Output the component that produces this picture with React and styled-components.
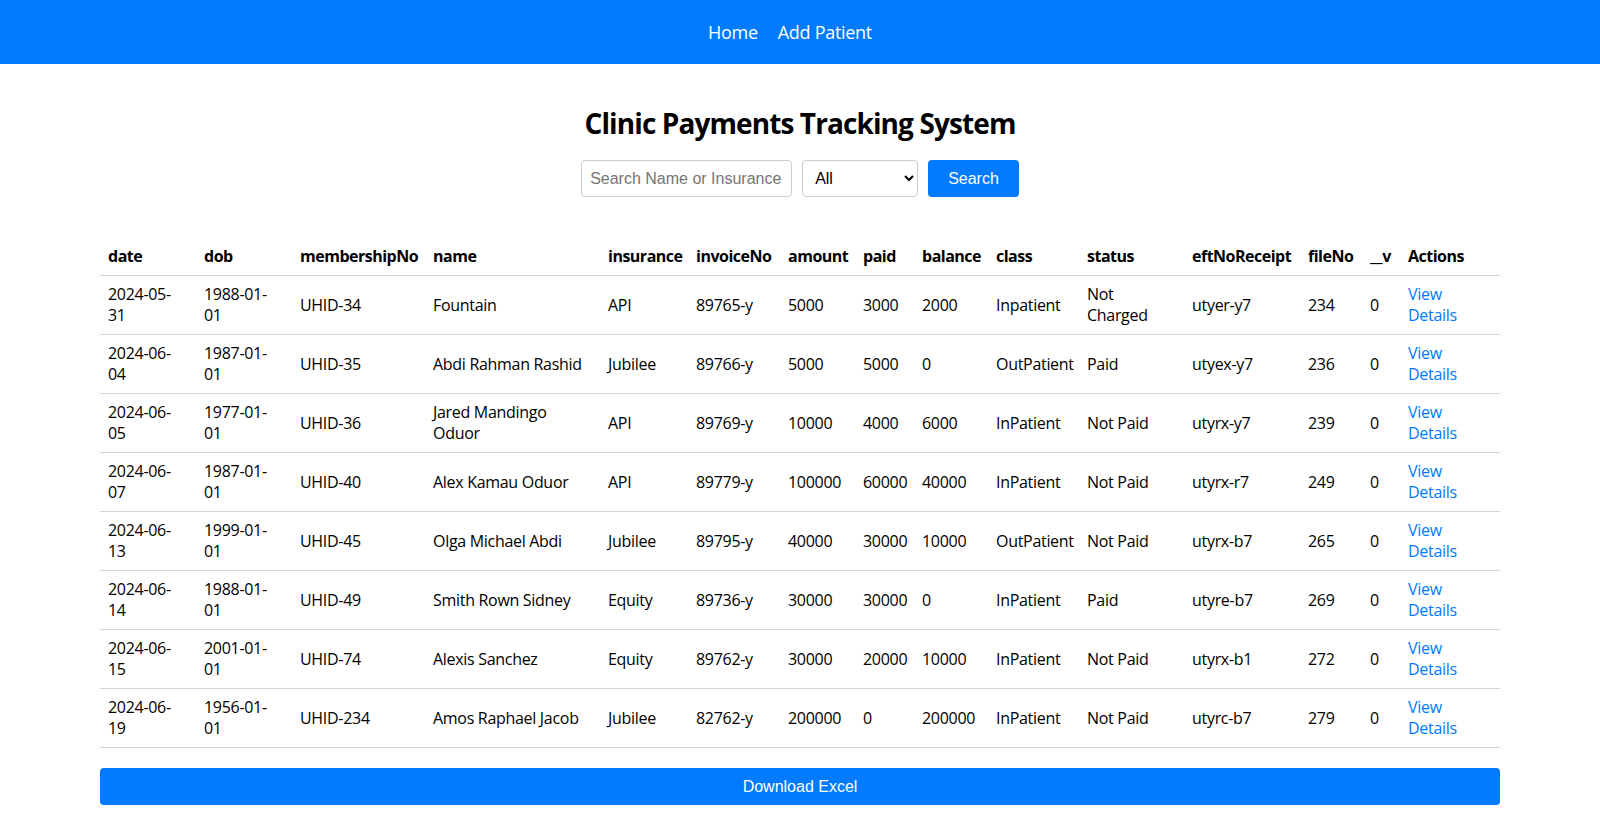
import React, { useState } from "react";
import styled, { createGlobalStyle } from "styled-components";

const GlobalStyle = createGlobalStyle`
  body {
    margin: 0;
    font-family: "Open Sans", "Noto Sans", sans-serif;
    color: #000;
    background: #fff;
  }
`;

const patients = [
  { date: "2024-05-31", dob: "1988-01-01", membershipNo: "UHID-34", name: "Fountain", insurance: "API", invoiceNo: "89765-y", amount: 5000, paid: 3000, balance: 2000, class: "Inpatient", status: "Not Charged", eftNoReceipt: "utyer-y7", fileNo: 234, __v: 0 },
  { date: "2024-06-04", dob: "1987-01-01", membershipNo: "UHID-35", name: "Abdi Rahman Rashid", insurance: "Jubilee", invoiceNo: "89766-y", amount: 5000, paid: 5000, balance: 0, class: "OutPatient", status: "Paid", eftNoReceipt: "utyex-y7", fileNo: 236, __v: 0 },
  { date: "2024-06-05", dob: "1977-01-01", membershipNo: "UHID-36", name: "Jared Mandingo Oduor", insurance: "API", invoiceNo: "89769-y", amount: 10000, paid: 4000, balance: 6000, class: "InPatient", status: "Not Paid", eftNoReceipt: "utyrx-y7", fileNo: 239, __v: 0 },
  { date: "2024-06-07", dob: "1987-01-01", membershipNo: "UHID-40", name: "Alex Kamau Oduor", insurance: "API", invoiceNo: "89779-y", amount: 100000, paid: 60000, balance: 40000, class: "InPatient", status: "Not Paid", eftNoReceipt: "utyrx-r7", fileNo: 249, __v: 0 },
  { date: "2024-06-13", dob: "1999-01-01", membershipNo: "UHID-45", name: "Olga Michael Abdi", insurance: "Jubilee", invoiceNo: "89795-y", amount: 40000, paid: 30000, balance: 10000, class: "OutPatient", status: "Not Paid", eftNoReceipt: "utyrx-b7", fileNo: 265, __v: 0 },
  { date: "2024-06-14", dob: "1988-01-01", membershipNo: "UHID-49", name: "Smith Rown Sidney", insurance: "Equity", invoiceNo: "89736-y", amount: 30000, paid: 30000, balance: 0, class: "InPatient", status: "Paid", eftNoReceipt: "utyre-b7", fileNo: 269, __v: 0 },
  { date: "2024-06-15", dob: "2001-01-01", membershipNo: "UHID-74", name: "Alexis Sanchez", insurance: "Equity", invoiceNo: "89762-y", amount: 30000, paid: 20000, balance: 10000, class: "InPatient", status: "Not Paid", eftNoReceipt: "utyrx-b1", fileNo: 272, __v: 0 },
  { date: "2024-06-19", dob: "1956-01-01", membershipNo: "UHID-234", name: "Amos Raphael Jacob", insurance: "Jubilee", invoiceNo: "82762-y", amount: 200000, paid: 0, balance: 200000, class: "InPatient", status: "Not Paid", eftNoReceipt: "utyrc-b7", fileNo: 279, __v: 0 },
];

// column keys with the widths measured from the screenshot
const columns = [
  ["date", 96],
  ["dob", 96],
  ["membershipNo", 133],
  ["name", 175],
  ["insurance", 88],
  ["invoiceNo", 92],
  ["amount", 75],
  ["paid", 59],
  ["balance", 74],
  ["class", 91],
  ["status", 105],
  ["eftNoReceipt", 116],
  ["fileNo", 62],
  ["__v", 38],
];

const App = () => {
  const [query, setQuery] = useState("");
  const [filter, setFilter] = useState("All");

  return (
    <>
      <GlobalStyle />
      <Navbar>
        <NavLink href="#">Home</NavLink>
        <NavLink href="#">Add Patient</NavLink>
      </Navbar>
      <Main>
        <Title>Clinic Payments Tracking System</Title>
        <SearchBar onSubmit={(e) => e.preventDefault()}>
          <SearchInput
            type="text"
            placeholder="Search Name or Insurance"
            value={query}
            onChange={(e) => setQuery(e.target.value)}
          />
          <FilterSelect value={filter} onChange={(e) => setFilter(e.target.value)}>
            <option>All</option>
            <option>Paid</option>
            <option>Not Paid</option>
            <option>Not Charged</option>
          </FilterSelect>
          <PrimaryButton type="submit">Search</PrimaryButton>
        </SearchBar>

        <Table>
          <colgroup>
            {columns.map(([key, w]) => (
              <col key={key} style={{ width: w }} />
            ))}
            <col />
          </colgroup>
          <thead>
            <tr>
              {columns.map(([key]) => (
                <Th key={key}>{key}</Th>
              ))}
              <Th>Actions</Th>
            </tr>
          </thead>
          <tbody>
            {patients.map((p) => (
              <tr key={p.membershipNo}>
                {columns.map(([key]) => (
                  <Td key={key}>{p[key]}</Td>
                ))}
                <Td>
                  <DetailsLink href="#">View Details</DetailsLink>
                </Td>
              </tr>
            ))}
          </tbody>
        </Table>

        <DownloadButton>Download Excel</DownloadButton>
      </Main>
    </>
  );
};

const Navbar = styled.nav`
  height: 64px;
  background: #007bff;
  display: flex;
  justify-content: center;
  align-items: center;
`;

const NavLink = styled.a`
  color: #fff;
  text-decoration: none;
  font-size: 18px;
  letter-spacing: -0.3px;
  margin-right: 20px;
`;

const Main = styled.main`
  padding: 40px 100px 20px;
  display: flex;
  flex-direction: column;
  align-items: center;
`;

const Title = styled.h1`
  margin: 0;
  font-size: 28px;
  line-height: 38px;
  font-weight: 700;
  letter-spacing: -0.9px;
  text-align: center;
`;

const SearchBar = styled.form`
  margin-top: 18px;
  display: flex;
  gap: 10px;
  align-items: center;
`;

const SearchInput = styled.input`
  width: 211px;
  height: 37px;
  box-sizing: border-box;
  padding: 8px;
  border: 1px solid #ccc;
  border-radius: 4px;
  font-family: "Liberation Sans", Arial, sans-serif;
  font-size: 16px;

  &::placeholder {
    color: #757575;
  }
`;

const FilterSelect = styled.select`
  width: 116px;
  height: 37px;
  box-sizing: border-box;
  padding: 0 8px;
  border: 1px solid #ccc;
  border-radius: 4px;
  background: #fff;
  color: #000;
  font-family: "Liberation Sans", Arial, sans-serif;
  font-size: 16px;
`;

const PrimaryButton = styled.button`
  height: 37px;
  padding: 0 20px;
  border: none;
  border-radius: 4px;
  background: #007bff;
  color: #fff;
  font-family: "Liberation Sans", Arial, sans-serif;
  font-size: 16px;
  cursor: pointer;
`;

const Table = styled.table`
  margin-top: 41px;
  width: 100%;
  table-layout: fixed;
  border-collapse: collapse;
  font-size: 16px;
  line-height: 21px;
  letter-spacing: -0.3px;
`;

const Th = styled.th`
  text-align: left;
  font-weight: 700;
  letter-spacing: -0.5px;
  padding: 8px;
  border-bottom: 1px solid #d6d6d6;
  white-space: nowrap;
`;

const Td = styled.td`
  padding: 8px;
  border-bottom: 1px solid #d6d6d6;
  vertical-align: middle;
`;

const DetailsLink = styled.a`
  color: #007bff;
  text-decoration: none;
`;

const DownloadButton = styled(PrimaryButton)`
  margin-top: 20px;
  width: 100%;
`;

export default App;
